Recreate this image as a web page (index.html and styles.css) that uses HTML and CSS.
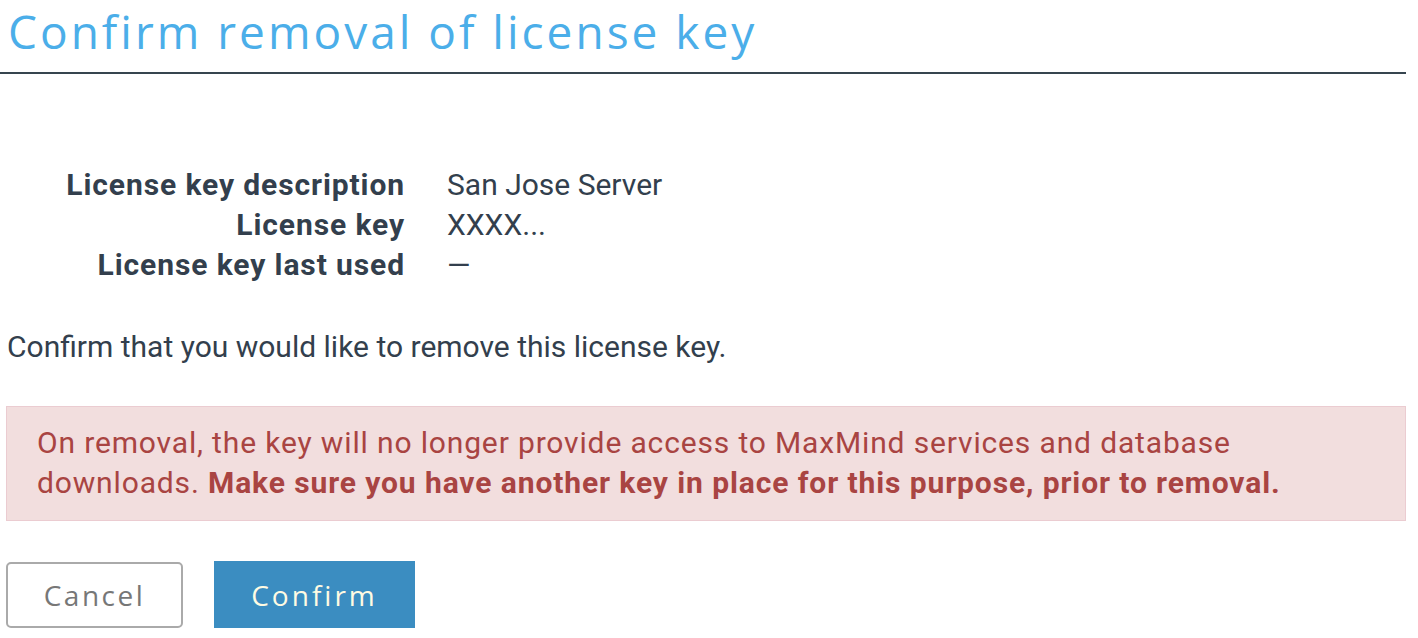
FILE: index.html
```html
<!DOCTYPE html>
<html lang="en">
    <head>
        <meta charset="UTF-8" />
        <title>Confirm removal of license key</title>
        <link rel="stylesheet" href="styles.css">
    </head>
    <body>

        <div class="page">
            <h1 class="page-title">Confirm removal of license key</h1>

            <div class="content">
                <dl class="key-details">
                    <dt>License key description</dt>
                    <dd>San Jose Server</dd>
                    <dt>License key</dt>
                    <dd>XXXX...</dd>
                    <dt>License key last used</dt>
                    <dd>&mdash;</dd>
                </dl>

                <p class="confirm-text">Confirm that you would like to remove this license key.</p>

                <div class="alert">
                    On removal, the key will no longer provide access to MaxMind services and database
                    downloads. <strong>Make sure you have another key in place for this purpose, prior to removal.</strong>
                </div>

                <form class="actions">
                    <button type="button" class="btn btn-cancel">Cancel</button>
                    <button type="submit" class="btn btn-confirm">Confirm</button>
                </form>
            </div>
        </div>

    </body>
</html>
```

FILE: styles.css
```css
body {
    margin: 0;
    font-family: Roboto, 'Liberation Sans', sans-serif;
    background-color: #FFFFFF;
    color: #333F4D;
}

.page {
    width: 1406px;
}

.page-title {
    margin: 0;
    padding: 2px 0 12px 8px;
    font-family: 'Open Sans', sans-serif;
    font-size: 46px;
    font-weight: 400;
    letter-spacing: 3px;
    line-height: 58px;
    color: #4BAEE9;
    border-bottom: 2px solid #36454F;
}

.content {
    padding: 0 0 0 6px;
}

.key-details {
    display: grid;
    grid-template-columns: 399px 1fr;
    column-gap: 42px;
    margin: 91px 0 0 0;
    font-size: 30px;
    line-height: 40px;
}

.key-details dt {
    font-weight: bold;
    letter-spacing: 0.9px;
    text-align: right;
}

.key-details dd {
    margin: 0;
}

.confirm-text {
    margin: 42px 0 0 1px;
    font-size: 30px;
    line-height: 40px;
}

.alert {
    margin-top: 39px;
    padding: 16px 30px 17px 30px;
    background-color: #F2DEDE;
    border: 1px solid #EBCCD1;
    color: #A94442;
    font-size: 30px;
    letter-spacing: 0.85px;
    line-height: 40px;
}

.alert strong {
    letter-spacing: 0.9px;
}

.actions {
    display: flex;
    align-items: center;
    gap: 31px;
    margin-top: 40px;
}

.btn {
    font-family: 'Open Sans', sans-serif;
    font-size: 28px;
    height: 67px;
    cursor: pointer;
}

.btn-cancel {
    width: 177px;
    height: 66px;
    background-color: #FFFFFF;
    color: #777777;
    letter-spacing: 2.5px;
    border: 2px solid #AAAAAA;
    border-radius: 5px;
}

.btn-confirm {
    width: 201px;
    background-color: #3B8DC1;
    color: #FFFBE3;
    letter-spacing: 3px;
    border: none;
}
```
